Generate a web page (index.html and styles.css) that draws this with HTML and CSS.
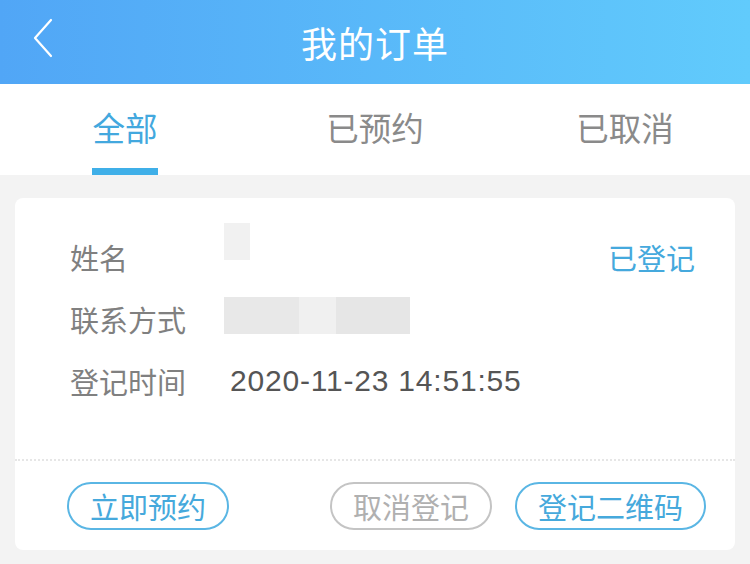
FILE: index.html
```html
<!DOCTYPE html>
<html lang="zh-CN">
<head>
<meta charset="UTF-8">
<meta name="viewport" content="width=device-width, initial-scale=1.0">
<title>我的订单</title>
<link rel="stylesheet" href="styles.css">
</head>
<body>
<div class="header">
    <span class="back">
        <svg width="24" height="44" viewBox="0 0 24 44"><polyline points="19,4 3,22 19,40" fill="none" stroke="#fff" stroke-width="2.2" stroke-linecap="round" stroke-linejoin="round"/></svg>
    </span>
    <h1>我的订单</h1>
</div>
<div class="tabs">
    <div class="tab active"><span>全部</span></div>
    <div class="tab"><span>已预约</span></div>
    <div class="tab"><span>已取消</span></div>
</div>
<div class="card">
    <div class="info">
        <div class="row">
            <span class="label">姓名</span>
            <span class="value"><span class="mask mask-name"></span></span>
            <span class="status">已登记</span>
        </div>
        <div class="row">
            <span class="label">联系方式</span>
            <span class="value"><span class="mask mask-phone"></span></span>
        </div>
        <div class="row">
            <span class="label">登记时间</span>
            <span class="value date">2020-11-23 14:51:55</span>
        </div>
    </div>
    <div class="actions">
        <button class="btn">立即预约</button>
        <span class="spacer"></span>
        <button class="btn btn-gray">取消登记</button>
        <button class="btn">登记二维码</button>
    </div>
</div>
</body>
</html>
```
FILE: styles.css
```css
body {
    margin: 0;
    padding: 0;
    width: 750px;
    height: 564px;
    overflow: hidden;
    background-color: #f3f3f3;
    font-family: "Noto Sans CJK SC", "Noto Sans", sans-serif;
}
.header {
    position: relative;
    height: 84px;
    display: flex;
    align-items: center;
    justify-content: center;
    background: linear-gradient(90deg, #51a6f6, #61cbfc);
}
.header h1 {
    margin: 0;
    font-size: 36px;
    font-weight: 400;
    color: #fff;
    letter-spacing: 1px;
}
.back {
    position: absolute;
    left: 32px;
    top: 16px;
    display: flex;
}
.tabs {
    display: flex;
    height: 91px;
    background-color: #fff;
}
.tab {
    flex: 1;
    display: flex;
    justify-content: center;
}
.tab span {
    display: flex;
    align-items: center;
    height: 84px;
    font-size: 32.5px;
    color: #8a8a8a;
    border-bottom: 7px solid transparent;
}
.tab.active span {
    color: #43a8de;
    border-bottom-color: #3fafe8;
}
.card {
    margin: 23px 15px 0;
    background-color: #fff;
    border-radius: 8px;
}
.info {
    padding: 28px 40px 47px 55px;
    border-bottom: 2px dotted #e6e6e6;
}
.row {
    display: flex;
    align-items: center;
    height: 62px;
}
.label {
    width: 158px;
    font-size: 29px;
    color: #808080;
}
.value {
    flex: 1;
    font-size: 28px;
    color: #555;
}
.date {
    font-family: "Liberation Sans", "Noto Sans", sans-serif;
    font-size: 30px;
    letter-spacing: 0.8px;
    padding-left: 2px;
}
.status {
    font-size: 29px;
    color: #45a9dd;
}
.mask {
    display: block;
    margin-left: -4px;
}
.mask-name {
    width: 26px;
    height: 37px;
    background-color: #f1f1f1;
    transform: translateY(-16px);
}
.mask-phone {
    width: 186px;
    height: 37px;
    background: linear-gradient(90deg, #e8e8e8 0, #e8e8e8 75px, #f0f0f0 75px, #f0f0f0 112px, #e6e6e6 112px);
    transform: translateY(-4px);
}
.actions {
    display: flex;
    align-items: center;
    gap: 23px;
    padding: 21px 29px 20px 52px;
}
.spacer {
    flex: 1;
}
.btn {
    height: 48px;
    padding: 0 21px;
    border: 2px solid #5ab6e4;
    border-radius: 24px;
    background-color: #fff;
    font-family: inherit;
    font-size: 29px;
    color: #46a9dc;
    line-height: 1;
}
.btn-gray {
    border-color: #c4c4c4;
    color: #b0b0b0;
}
```
